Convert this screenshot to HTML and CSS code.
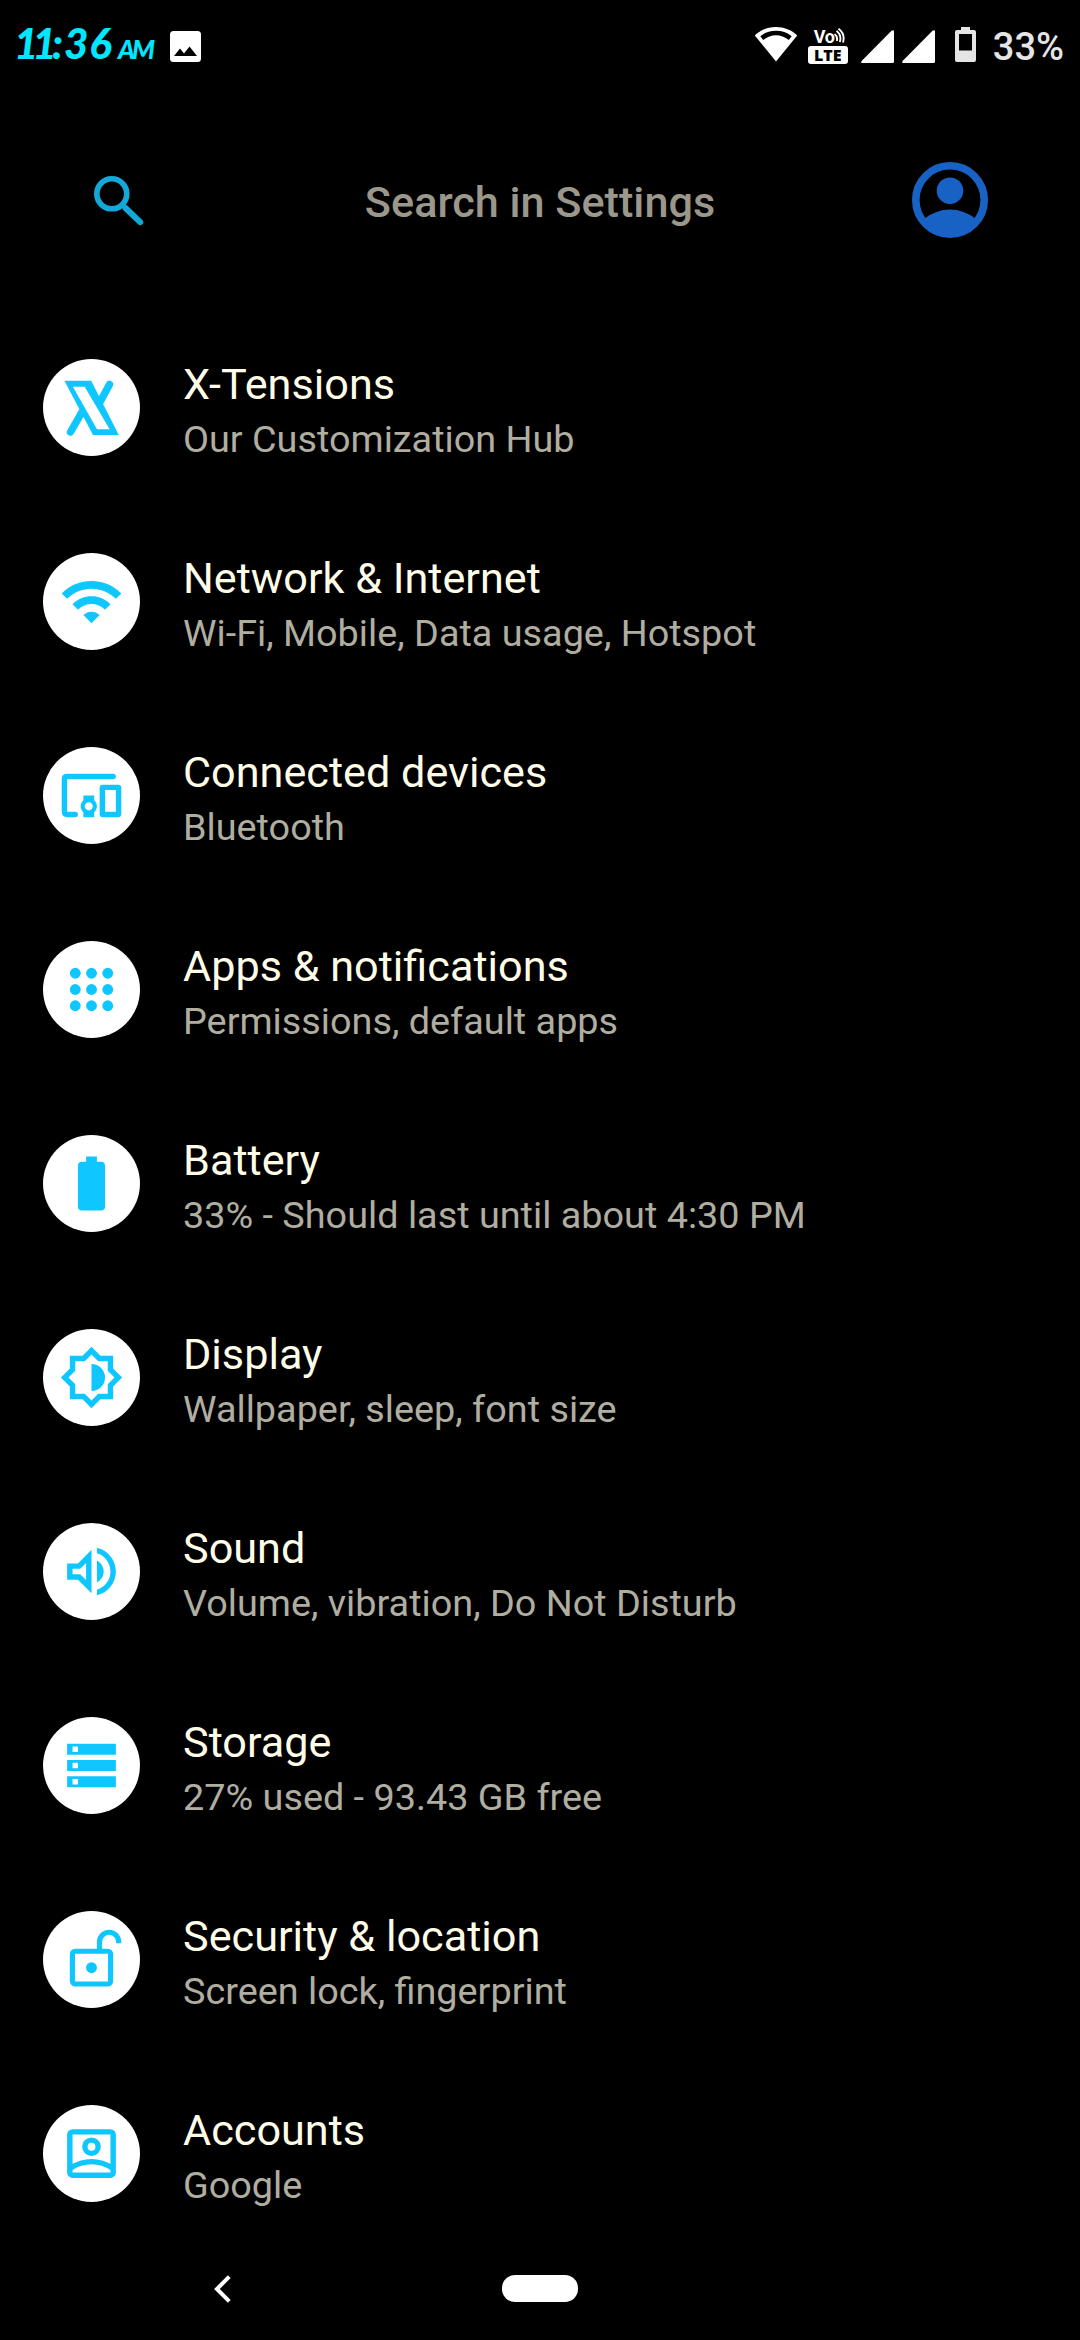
FILE: index.html
```html
<!DOCTYPE html>
<html lang="en">
<head>
  <meta charset="UTF-8" />
  <meta name="viewport" content="width=device-width, initial-scale=1.0"/>
  <title>Settings</title>
  <link rel="stylesheet" href="styles.css">
</head>
<body>
  <!-- Status bar -->
  <header class="status-bar">
    <div class="clock"><span class="hour">11</span><span class="colon">:</span><span class="minute">36</span><span class="ampm">AM</span></div>
    <svg class="image-icon" width="31" height="31" viewBox="0 0 31 31">
      <rect width="31" height="31" rx="3.5" fill="#fff"/>
      <path d="M4 25l6-7.5 4 5 5.500-7L27 25z" fill="#000"/>
    </svg>
    <div class="status-right">
      <svg class="wifi" width="44" height="36" viewBox="0 0 44 36">
        <path d="M22 35.500L.8 9.500C12-2 32-2 43.200 9.500z" fill="#fff"/>
        <path d="M6.300 10.200C15 3 29 3 37.700 10.200L34.800 14C27 7.500 17 7.500 9.200 14z" fill="#000"/>
      </svg>
      <div class="volte">
        <div class="vo">Vo
          <svg width="11" height="17" viewBox="0 0 11 17" fill="none" stroke="#fff" stroke-width="1.900">
            <path d="M.5 6Q4 8.500 2.800 13M2.500 3Q8 7 5.800 14M4.500.8Q11.500 6 9 14.500"/>
          </svg>
        </div>
        <div class="lte">LTE</div>
      </div>
      <svg class="signal" width="33" height="33" viewBox="0 0 33 33"><path d="M33 1.500V31.500Q33 33 31.500 33H1.500Q-.5 33 .6 31L30.500.8Q33-.8 33 1.500z" fill="#fff"/></svg>
      <svg class="signal" width="33" height="33" viewBox="0 0 33 33"><path d="M33 1.500V31.500Q33 33 31.500 33H1.500Q-.5 33 .6 31L30.500.8Q33-.8 33 1.500z" fill="#fff"/></svg>
      <svg class="battery" width="21" height="35" viewBox="0 0 21 35">
        <path fill-rule="evenodd" d="M6 0h9v3h4q2 0 2 2v28q0 2-2 2H2q-2 0-2-2V5q0-2 2-2h4zM4 7v16.500h13V7z" fill="#e5e5e5"/>
      </svg>
      <span class="percent">33%</span>
    </div>
  </header>

  <!-- Search -->
  <div class="search-bar">
    <svg width="50" height="50" viewBox="0 0 50 50" fill="none" stroke="#12a8d8">
      <circle cx="17.800" cy="17.800" r="15" stroke-width="5.600"/>
      <path d="M31.500 32L46.200 46.200" stroke-width="6" stroke-linecap="round"/>
    </svg>
    <div class="search-text">Search in Settings</div>
    <svg width="76" height="76" viewBox="0 0 76 76">
      <circle cx="38" cy="38" r="34.200" fill="none" stroke="#1862c6" stroke-width="7.600"/>
      <circle cx="38" cy="28.700" r="13.300" fill="#1862c6"/>
      <path d="M12 57Q24 47.500 38 47.500T64 57Q54 73 38 73T12 57z" fill="#1862c6"/>
    </svg>
  </div>

  <!-- Settings list -->
  <main class="list">
    <div class="item">
      <div class="icon">
        <svg viewBox="0 0 65 65">
          <path d="M11.500 57L23 37M50.500 9.500L40.500 28" stroke="#0fc6ff" stroke-width="7.500" stroke-linecap="round"/>
          <path d="M5.400 5.700H32.200L59.800 60H34z"/>
          <path d="M13.900 11.700L38 54.300H50.600L25.700 11.700z" fill="#fff"/>
        </svg>
      </div>
      <div class="text">
        <div class="title">X-Tensions</div>
        <div class="summary">Our Customization Hub</div>
      </div>
    </div>

    <div class="item">
      <div class="icon">
        <svg viewBox="0 0 24 24"><path d="M1 9l2 2c4.970-4.970 13.030-4.970 18 0l2-2C16.930 2.930 7.080 2.930 1 9zm8 8l3 3 3-3c-1.650-1.660-4.340-1.660-6 0zm-4-4l2 2c2.760-2.760 7.240-2.760 10 0l2-2C15.140 9.140 8.870 9.140 5 13z"/></svg>
      </div>
      <div class="text">
        <div class="title">Network &amp; Internet</div>
        <div class="summary">Wi-Fi, Mobile, Data usage, Hotspot</div>
      </div>
    </div>

    <div class="item">
      <div class="icon">
        <svg viewBox="0 0 24 24">
          <path d="M20 5H3Q2 5 2 6V18Q2 19 3 19H6" fill="none" stroke="#0fc6ff" stroke-width="2" stroke-linecap="round"/>
          <path d="M13 12H9v1.780c-.61.55-1 1.330-1 2.220s.39 1.670 1 2.220V20h4v-1.780c.61-.55 1-1.340 1-2.220s-.39-1.670-1-2.220V12zm-2 5.500c-.83 0-1.500-.67-1.500-1.500s.67-1.500 1.500-1.500 1.500.67 1.500 1.500-.67 1.500-1.500 1.500zM22 8h-6c-.5 0-1 .5-1 1v10c0 .5.5 1 1 1h6c.5 0 1-.5 1-1V9c0-.5-.5-1-1-1zm-1 10h-4v-8h4v8z"/>
        </svg>
      </div>
      <div class="text">
        <div class="title">Connected devices</div>
        <div class="summary">Bluetooth</div>
      </div>
    </div>

    <div class="item">
      <div class="icon">
        <svg viewBox="0 0 24 24">
          <circle cx="6" cy="6" r="2"/><circle cx="12" cy="6" r="2"/><circle cx="18" cy="6" r="2"/>
          <circle cx="6" cy="12" r="2"/><circle cx="12" cy="12" r="2"/><circle cx="18" cy="12" r="2"/>
          <circle cx="6" cy="18" r="2"/><circle cx="12" cy="18" r="2"/><circle cx="18" cy="18" r="2"/>
        </svg>
      </div>
      <div class="text">
        <div class="title">Apps &amp; notifications</div>
        <div class="summary">Permissions, default apps</div>
      </div>
    </div>

    <div class="item">
      <div class="icon">
        <svg viewBox="0 0 24 24"><path d="M15.670 4H14V2h-4v2H8.330C7.600 4 7 4.600 7 5.330v15.330C7 21.400 7.600 22 8.330 22h7.330c.74 0 1.340-.6 1.340-1.330V5.330C17 4.600 16.400 4 15.670 4z"/></svg>
      </div>
      <div class="text">
        <div class="title">Battery</div>
        <div class="summary">33% - Should last until about 4:30 PM</div>
      </div>
    </div>

    <div class="item">
      <div class="icon">
        <svg viewBox="0 0 24 24">
          <path fill-rule="evenodd" d="M20 8.690V4h-4.690L12 .69 8.690 4H4v4.690L.69 12 4 15.310V20h4.690L12 23.310 15.310 20H20v-4.690L23.310 12 20 8.690zM18 14.480V18h-3.520L12 20.480 9.520 18H6v-3.520L3.520 12 6 9.520V6h3.520L12 3.520 14.480 6H18v3.520L20.480 12z"/>
          <path d="M12 7v10a5 5 0 0 0 0-10z"/>
        </svg>
      </div>
      <div class="text">
        <div class="title">Display</div>
        <div class="summary">Wallpaper, sleep, font size</div>
      </div>
    </div>

    <div class="item">
      <div class="icon">
        <svg viewBox="0 0 24 24">
          <path fill-rule="evenodd" d="M3 9v6h4l5 5V4L7 9H3zM10 8.830v6.340L7.830 13H5v-2h2.830z"/>
          <path d="M16.500 12c0-1.770-1.020-3.290-2.500-4.030v8.050c1.480-.73 2.500-2.250 2.500-4.020zM14 3.230v2.060c2.890.86 5 3.540 5 6.710s-2.110 5.850-5 6.710v2.060c4.010-.91 7-4.490 7-8.770s-2.990-7.860-7-8.770z"/>
        </svg>
      </div>
      <div class="text">
        <div class="title">Sound</div>
        <div class="summary">Volume, vibration, Do Not Disturb</div>
      </div>
    </div>

    <div class="item">
      <div class="icon">
        <svg viewBox="0 0 24 24"><path fill-rule="evenodd" d="M3 4h18v4H3zM5 5v2h2V5zM3 10h18v4H3zM5 11v2h2v-2zM3 16h18v4H3zM5 17v2h2v-2z"/></svg>
      </div>
      <div class="text">
        <div class="title">Storage</div>
        <div class="summary">27% used - 93.43 GB free</div>
      </div>
    </div>

    <div class="item">
      <div class="icon">
        <svg viewBox="0 0 24 24">
          <g fill="none" stroke="#0fc6ff" stroke-width="1.900">
            <rect x="4.950" y="8.950" width="14.100" height="12.100" rx="1"/>
            <path d="M14.950 9V5.500a3.550 3.550 0 0 1 7.100 0V6"/>
          </g>
          <circle cx="12" cy="15" r="2"/>
        </svg>
      </div>
      <div class="text">
        <div class="title">Security &amp; location</div>
        <div class="summary">Screen lock, fingerprint</div>
      </div>
    </div>

    <div class="item">
      <div class="icon">
        <svg viewBox="0 0 24 24" class="outline">
          <rect x="4" y="4" width="16" height="16" rx="1"/>
          <circle cx="12" cy="9.500" r="2.450"/>
          <path d="M4 17.500Q12 12.500 20 17.500"/>
        </svg>
      </div>
      <div class="text">
        <div class="title">Accounts</div>
        <div class="summary">Google</div>
      </div>
    </div>
  </main>

  <!-- Navigation bar -->
  <nav class="nav-bar">
    <svg width="17" height="28" viewBox="0 0 17 28" fill="none" stroke="#fff" stroke-width="4"><path d="M15.300 1.600L2.900 14l12.400 12.400"/></svg>
    <div class="home"></div>
  </nav>
</body>
</html>
```
FILE: styles.css
```css
* { box-sizing: border-box; }
body {
  margin: 0; width: 1080px; height: 2340px; background: #000; overflow: hidden;
  font-family: Roboto, "Liberation Sans", sans-serif;
  display: flex; flex-direction: column;
}
svg { display: block; flex: none; }

.status-bar {
  height: 92px; padding: 0 16px 0 14px; flex: none;
  display: flex; align-items: center;
}
.clock {
  width: 156px; display: flex; align-items: baseline; color: #00e8ff;
  font-family: Lato, Roboto, sans-serif; font-style: italic; font-weight: 900;
  font-size: 42px; line-height: 50px; white-space: nowrap;
}
.hour { width: 38px; letter-spacing: -6px; }
.colon { width: 12px; }
.minute { width: 54px; letter-spacing: 1px; }
.ampm { font-size: 26px; letter-spacing: -3px; }

.status-right { margin-left: auto; display: flex; align-items: center; }
.wifi { margin-right: 10px; margin-bottom: 4px; }
.volte { width: 40px; margin-right: 13px; color: #fff; }
.vo {
  height: 18px; padding-left: 6px; display: flex;
  font-size: 18px; line-height: 17px; font-weight: 700; letter-spacing: -.5px;
}
.lte {
  height: 18px; border-radius: 3px; background: #fff; color: #000;
  font-family: "Open Sans", sans-serif; font-size: 16px; line-height: 18px;
  font-weight: 800; text-align: center;
}
.signal { margin-right: 8px; }
.battery { margin-left: 12px; margin-right: 17px; margin-bottom: 3px; }
.percent { padding-top: 2px; color: #e5e5e5; font-size: 38px; font-weight: 500; line-height: 44px; }

.search-bar {
  height: 218px; padding: 70px 92px 0 94px; flex: none;
  display: flex; align-items: flex-start;
}
.search-bar svg:first-child { margin-top: 14px; }
.search-text {
  flex: 1; padding-left: 24px; text-align: center;
  margin-top: 16px; color: #9b978b; font-size: 43.2px; line-height: 50px; font-weight: 500;
}

.list { height: 1940px; flex: none; }
.item { height: 194px; padding: 49px 43px 0; display: flex; gap: 43px; }
.icon {
  width: 97px; height: 97px; border-radius: 50%; background: #fff; flex: none;
  display: flex; align-items: center; justify-content: center;
}
.icon svg { width: 65px; height: 65px; fill: #0fc6ff; }
.icon .outline { fill: none; stroke: #0fc6ff; stroke-width: 2; }
.text { padding-top: 1px; }
.title { color: #fffde7; font-size: 43.2px; line-height: 50px; }
.summary { color: #b0aea0; font-size: 37.8px; line-height: 58px; }

.nav-bar {
  flex: 1; padding: 0 214px 13px; display: flex; align-items: center;
}
.home { width: 76px; height: 27px; margin-left: 271px; border-radius: 13px; background: #fff; }
```
